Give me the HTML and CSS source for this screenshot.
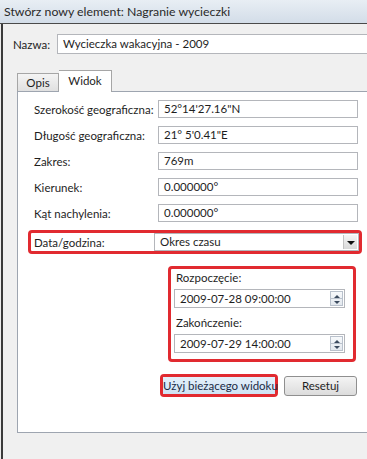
FILE: index.html
```html
<!DOCTYPE html>
<html lang="pl">
<head>
	<meta charset="UTF-8">
	<meta name="viewport" content="width=device-width, initial-scale=1.0">
	<title>Stwórz nowy element</title>
	<link rel="stylesheet" href="styles.css">
</head>
<body>
	<div class="window">
		<div class="titlebar">Stwórz nowy element: Nagranie wycieczki</div>
		<div class="dialog">
			<div class="name-row">
				<label>Nazwa:</label>
				<div class="field name-field">Wycieczka wakacyjna - 2009</div>
			</div>
			<div class="tabs">
				<span class="tab">Opis</span>
				<span class="tab active">Widok</span>
			</div>
			<div class="panel">
				<div class="row"><label>Szerokość geograficzna:</label><div class="field">52°14'27.16"N</div></div>
				<div class="row"><label>Długość geograficzna:</label><div class="field">21° 5'0.41"E</div></div>
				<div class="row"><label>Zakres:</label><div class="field">769m</div></div>
				<div class="row"><label>Kierunek:</label><div class="field">0.000000°</div></div>
				<div class="row"><label>Kąt nachylenia:</label><div class="field">0.000000°</div></div>
				<div class="row marked">
					<label>Data/godzina:</label>
					<div class="field select">Okres czasu<span class="drop"></span></div>
				</div>
				<div class="period">
					<label>Rozpoczęcie:</label>
					<div class="field spin">2009-07-28 09:00:00<span class="spinner"><i class="up"></i><i class="down"></i></span></div>
					<label>Zakończenie:</label>
					<div class="field spin">2009-07-29 14:00:00<span class="spinner"><i class="up"></i><i class="down"></i></span></div>
				</div>
				<div class="buttons">
					<span class="marked-btn"><button class="btn current">Użyj bieżącego widoku</button></span>
					<button class="btn">Resetuj</button>
				</div>
			</div>
		</div>
	</div>
</body>
</html>
```

FILE: styles.css
```css
html,body{
	margin: 0; padding: 0;
}
body{
	width: 367px; height: 459px;
	overflow: hidden;
	background: #ececec;
	font-family: "Lato", "Liberation Sans", sans-serif;
	font-size: 11.5px;
	color: #1e1e1e;
}
label{ white-space: nowrap; }
.window{
	height: 459px;
	border-left: 2px solid #3a3a3a;
	margin-left: 1px;
	display: flex; flex-direction: column;
}
.titlebar{
	height: 23px;
	line-height: 23px;
	font-size: 12.3px;
	color: #2a2a2a;
	background: linear-gradient(#e8eef4, #d3dde8);
	border-bottom: 1px solid #4a4a4a;
	margin-left: -3px; padding-left: 4px;
}
.dialog{
	flex: 1;
	background: #f0f0f0;
	display: flex; flex-direction: column;
}
.name-row{
	display: flex; align-items: center;
	margin: 10px 0 0 10px;
	height: 20px;
}
.name-row label{ width: 44px; }
.field{
	height: 16px;
	line-height: 16px;
	border: 1px solid #b4b6bb;
	background: #fff;
	padding: 0 5px;
	position: relative;
	white-space: nowrap;
}
.name-field{
	flex: 1;
	height: 18px; line-height: 18px;
	border-right: 0;
}
.tabs{
	display: flex; align-items: flex-end;
	margin: 15px 0 0 14px;
	height: 22px;
}
.tab{
	height: 17px; line-height: 17px;
	padding: 0 8px;
	width: 24px; text-align: center;
	border: 1px solid #a6a6a6; border-bottom: 0;
	background: linear-gradient(#f4f4f4, #e0e0e0);
}
.tab.active{
	height: 21px; line-height: 20px;
	width: 36px;
	background: #fff;
	border-left: 0;
	margin-bottom: -1px;
	position: relative; z-index: 1;
}
.panel{
	flex: 1;
	margin: 0 0 26px 14px;
	background: #fff;
	border: 1px solid #9ea5b0; border-right: 0;
	padding: 8px 0 0 16px;
	display: flex; flex-direction: column;
}
.row{
	display: flex; align-items: center;
	margin-bottom: 8px;
	height: 18px;
}
.row label{ width: 124px; }
.row .field{ width: 188px; }
.row.marked{
	border: 3px solid #e12a30;
	border-radius: 4px;
	margin: 0 0 12px -6px;
	padding-left: 3px;
	width: 325px;
	height: 18px;
}
.select{
	padding-right: 16px;
}
.drop{
	position: absolute; right: 1px; top: 1px; bottom: 1px;
	width: 13px;
	background: linear-gradient(#f5f5f5, #d9d9d9);
	border-left: 1px solid #c3c3c3;
}
.drop::after{
	content: "";
	position: absolute; left: 3px; top: 6px;
	border: 4px solid transparent; border-top: 4px solid #111;
}
.period{
	margin-left: 134px;
	width: 179px;
	border: 3px solid #e12a30;
	border-radius: 4px;
	padding: 1px 0 6px 3px;
	display: flex; flex-direction: column;
}
.period label{
	height: 16px; line-height: 16px;
	margin-bottom: 3px;
	padding-left: 2px;
}
.period .field{
	width: 159px;
	height: 17px; line-height: 17px;
	margin-bottom: 7px;
}
.period .field:last-child{ margin-bottom: 0; }
.spinner{
	position: absolute; right: 1px; top: 1px; bottom: 1px;
	width: 13px;
	border: 1px solid #b9c1cc;
	box-sizing: border-box;
	background: linear-gradient(#f7f9fb, #e3e8ee);
	display: flex; flex-direction: column;
}
.spinner i{
	flex: 1;
	position: relative;
}
.spinner .up{ border-bottom: 1px solid #b9c1cc; }
.spinner i::after{
	content: "";
	position: absolute; left: 3px;
	border: 3px solid transparent;
}
.spinner .up::after{ top: 0; border-bottom: 3px solid #3b4a5e; }
.spinner .down::after{ top: 2px; border-top: 3px solid #3b4a5e; }
.buttons{
	display: flex; align-items: center;
	margin: 12px 0 0 126px;
	gap: 6px;
}
.marked-btn{
	border: 3px solid #e12a30;
	border-radius: 4px;
	display: flex;
}
.btn{
	font: inherit;
	color: #1e1e1e;
	height: 20px;
	padding: 0 2px;
	white-space: nowrap;
	border: 1px solid #8f8f8f;
	border-radius: 3px;
	background: linear-gradient(#f4f4f4, #dcdcdc);
}
.btn.current{
	width: 112px;
	height: 17px;
	border: 0; border-radius: 0;
	background: linear-gradient(#e4f0fa, #cfe3f4);
	color: #1b2b45;
	padding: 0;
}
.buttons > .btn{ width: 73px; }
```
